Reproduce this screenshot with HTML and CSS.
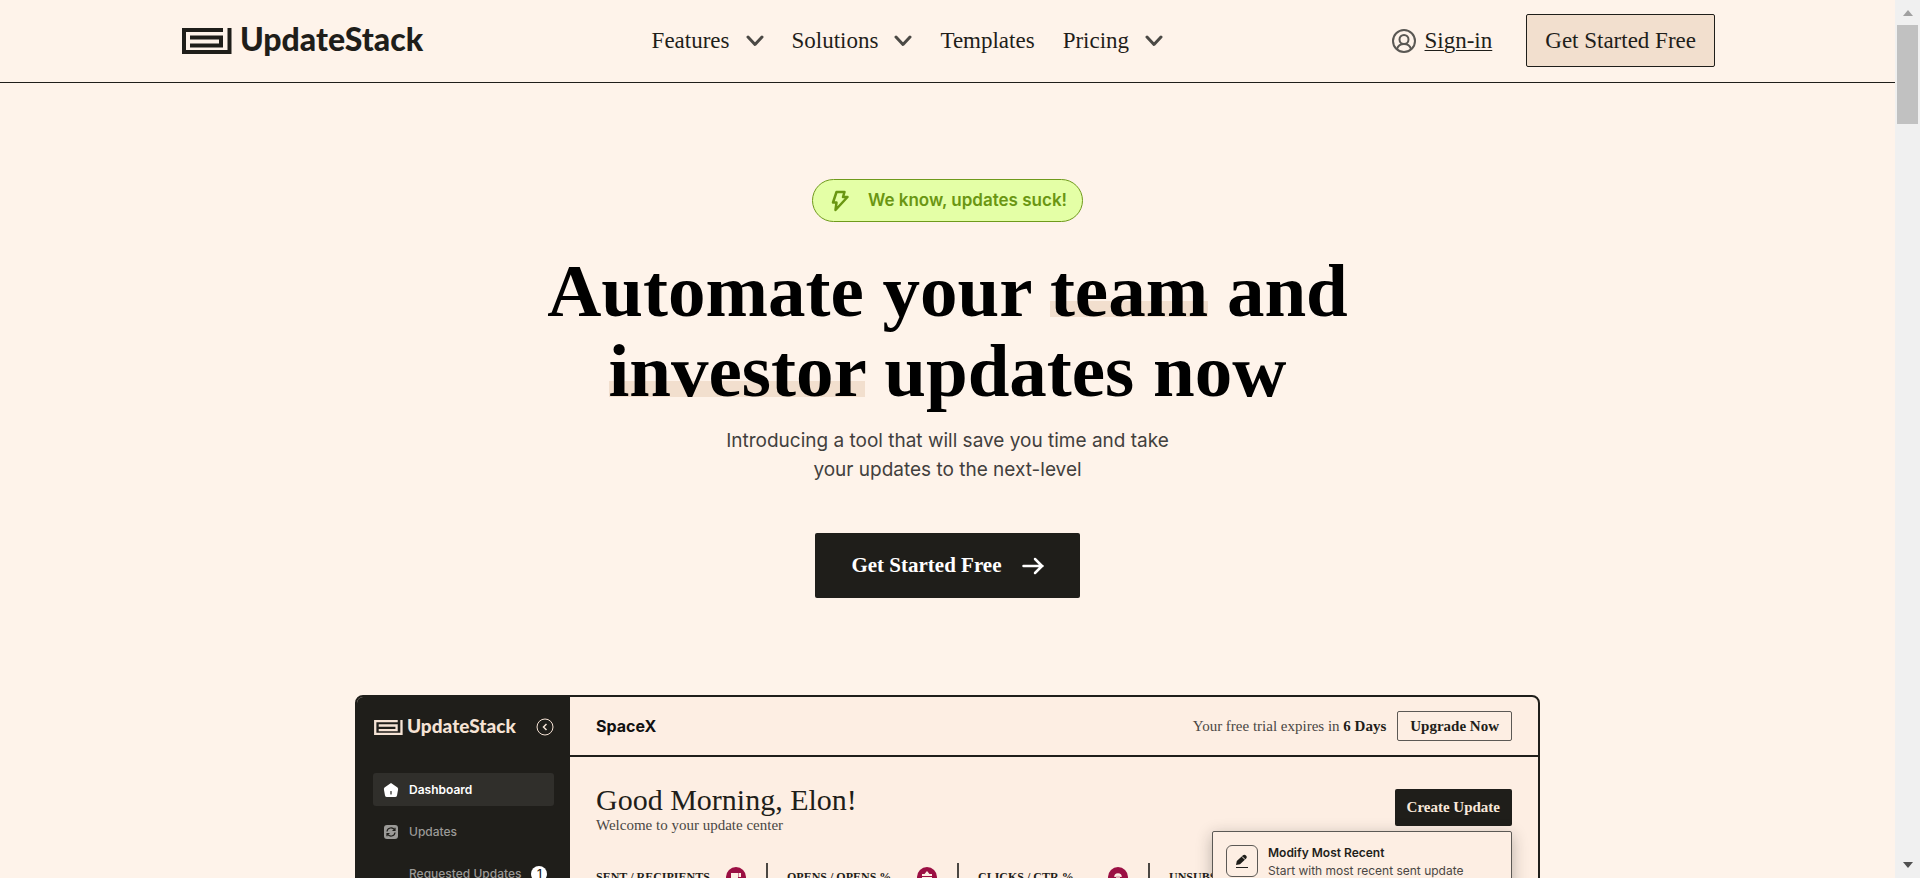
FILE: index.html
```html
<!DOCTYPE html>
<html lang="en">
<head>
<meta charset="utf-8">
<meta name="viewport" content="width=device-width, initial-scale=1">
<title>UpdateStack</title>
<link rel="stylesheet" href="styles.css">
</head>
<body>
<svg class="defs" aria-hidden="true">
  <symbol id="mark" viewBox="0 0 50 26"><path d="M41 2H2v22h45.500V0M8 9.500h31v8H8" fill="none" stroke="currentColor" stroke-width="4"/></symbol>
  <symbol id="chevron" viewBox="0 0 18 12"><path d="M2 2l7 7.500L16 2" fill="none" stroke="currentColor" stroke-width="3" stroke-linecap="round" stroke-linejoin="round"/></symbol>
</svg>
<div class="page">
  <header class="site-header">
    <a class="logo" href="#"><svg class="logo-mark"><use href="#mark"/></svg><span>UpdateStack</span></a>
    <nav class="nav">
      <button class="nav-item" type="button">Features <svg class="chevron"><use href="#chevron"/></svg></button>
      <button class="nav-item" type="button">Solutions <svg class="chevron"><use href="#chevron"/></svg></button>
      <a class="nav-item" href="#">Templates</a>
      <button class="nav-item" type="button">Pricing <svg class="chevron"><use href="#chevron"/></svg></button>
    </nav>
    <div class="account">
      <a class="signin" href="#">
        <svg class="signin-icon" viewBox="0 0 24 24" fill="none" stroke="currentColor" stroke-width="2"><circle cx="12" cy="12" r="11"/><circle cx="12" cy="10.500" r="4.500"/><path d="M5 20c1-3.500 3.500-5 7-5s6 1.500 7 5"/></svg>
        <span class="signin-text">Sign-in</span>
      </a>
      <a class="start" href="#">Get Started Free</a>
    </div>
  </header>
  <main class="hero">
    <p class="pill">
      <svg class="pill-icon" viewBox="0 0 18 22" fill="none" stroke="currentColor" stroke-width="2.500" stroke-linejoin="round"><path d="M5.500 2h8l-1.500 5h4.500L4.500 20l1-7.500H2z"/></svg>
      We know, updates suck!
    </p>
    <h1 class="title">Automate your <span class="mark">team</span> and<br><span class="mark">investor</span> updates now</h1>
    <p class="lead">Introducing a tool that will save you time and take<br>your updates to the next-level</p>
    <a class="cta" href="#">Get Started Free
      <svg class="cta-icon" viewBox="0 0 22 18" fill="none" stroke="currentColor" stroke-width="2.500" stroke-linecap="round" stroke-linejoin="round"><path d="M1.500 9h19M13 2l7 7-7 7"/></svg>
    </a>
    <section class="app">
      <aside class="sidebar">
        <div class="side-head">
          <a class="side-logo" href="#"><svg class="side-mark"><use href="#mark"/></svg><span>UpdateStack</span></a>
          <button class="collapse" type="button" aria-label="Collapse sidebar"><svg viewBox="0 0 18 18" fill="none" stroke="currentColor"><circle cx="9" cy="9" r="8"/><path d="M10.500 6l-3 3 3 3" stroke-width="1.500"/></svg></button>
        </div>
        <nav class="side-nav">
          <a class="side-item active" href="#"><svg class="side-icon" viewBox="0 0 16 16"><path d="M8 1L1.500 5.500Q0.500 6.500 1 8l1 5.500Q2.300 15 4 15h8q1.700 0 2-1.500L15 8q.5-1.500-.5-2.500z" fill="currentColor"/><path d="M8 9.500V12" stroke="#1f1e1a" stroke-width="1.200" stroke-linecap="round"/></svg>Dashboard</a>
          <a class="side-item" href="#"><svg class="side-icon" viewBox="0 0 16 16"><rect x="1" y="1" width="14" height="14" rx="3" fill="currentColor"/><path d="M4 7.500a4 4 0 0 1 7.500-1.500M12 3.800V6.500H9.500M12 8.500a4 4 0 0 1-7.500 1.500M4 12.200V9.500H6.500" fill="none" stroke="#1f1e1a" stroke-width="1.200"/></svg>Updates</a>
          <a class="side-item sub" href="#">Requested Updates <span class="count">1</span></a>
        </nav>
      </aside>
      <div class="panel">
        <div class="topbar">
          <strong class="company">SpaceX</strong>
          <span class="trial">Your free trial expires in <b>6 Days</b></span>
          <button class="upgrade" type="button">Upgrade Now</button>
        </div>
        <div class="content">
          <div class="greeting">
            <div>
              <h2 class="hello">Good Morning, Elon!</h2>
              <p class="welcome">Welcome to your update center</p>
            </div>
            <div class="create-wrap">
              <button class="create" type="button">Create Update</button>
              <div class="menu">
                <span class="menu-icon"><svg viewBox="0 0 16 16"><path d="M2 12l.8-4L9 2.300q1.500-1.200 3 .2 1.700 1.500.2 3L6 11.200z" fill="currentColor"/><path d="M8 3.500l3.200 3.200" stroke="#fdeee3"/><path d="M2 14.500h12" stroke="currentColor"/></svg></span>
                <div>
                  <p class="menu-title">Modify Most Recent</p>
                  <p class="menu-text">Start with most recent sent update</p>
                </div>
              </div>
            </div>
          </div>
          <div class="stats">
            <div class="stat">SENT / RECIPIENTS <svg class="stat-icon" viewBox="0 0 20 20"><circle cx="10" cy="10" r="10" fill="#9b0f43"/><path d="M5 6h7v8H5zM12.500 6H15v4h-2.500z" fill="#fdeee3"/></svg></div>
            <div class="stat">OPENS / OPENS % <svg class="stat-icon" viewBox="0 0 20 20"><circle cx="10" cy="10" r="10" fill="#9b0f43"/><path d="M10 4l2.500 3H15v7H5V7h2.500z" fill="#fdeee3"/><path d="M5 9.500h10" stroke="#9b0f43"/></svg></div>
            <div class="stat">CLICKS / CTR % <svg class="stat-icon" viewBox="0 0 20 20"><circle cx="10" cy="10" r="10" fill="#9b0f43"/><path d="M7 10a3 3 0 1 1 6 0M9 14V8h2v6" fill="none" stroke="#fdeee3" stroke-width="1.500"/></svg></div>
            <div class="stat">UNSUBSCRIBED</div>
          </div>
        </div>
      </div>
    </section>
  </main>
</div>
<div class="scrollbar" aria-hidden="true">
  <span class="arrow up"></span><span class="thumb"></span><span class="arrow down"></span>
</div>
</body>
</html>
```
FILE: styles.css
```css
:root {
  --ink: #1f1e1a;
  --paper: #fef3ea;
  --panel: #fdeee3;
  --sand: #f2dfce;
  --serif: "Liberation Serif", "Times New Roman", serif;
  --sans: Inter, "Liberation Sans", sans-serif;
}
* { box-sizing: border-box; }
body {
  margin: 0;
  display: flex;
  height: 100vh;
  overflow: hidden;
  background: var(--paper);
  color: var(--ink);
  font-family: var(--serif);
}
h1, h2, p { margin: 0; }
a { color: inherit; text-decoration: none; }
button { font: inherit; color: inherit; background: none; border: 0; padding: 0; cursor: pointer; }
svg { display: block; flex: none; }
.defs { position: absolute; width: 0; height: 0; }
.page { flex: 1; min-width: 0; overflow: hidden; }

.site-header {
  display: flex;
  align-items: center;
  justify-content: space-between;
  padding: 14px 180px 15px 182px;
  border-bottom: 1px solid var(--ink);
  font-size: 23px;
  line-height: 26px;
  white-space: nowrap;
}
.logo { display: flex; align-items: center; gap: 8px; font: 900 32px/26px Lato, sans-serif; }
.logo span { padding-bottom: 4px; }
.logo-mark { width: 50px; height: 26px; }
.nav { display: flex; gap: 28px; }
.nav-item { display: flex; align-items: center; gap: 16px; }
.chevron { width: 18px; height: 12px; color: #4b4945; }
.account { display: flex; align-items: center; gap: 34px; }
.signin { display: flex; align-items: center; gap: 9px; }
.signin-text { text-decoration: underline; text-decoration-thickness: 1px; text-underline-offset: 2px; }
.signin-icon { width: 24px; height: 24px; color: #5a5854; }
.start { padding: 13px 18px 12px; border: 1px solid var(--ink); border-radius: 2px; background: var(--sand); }

.hero { display: flex; flex-direction: column; align-items: center; padding: 96px 24px 0; }
.pill {
  display: flex;
  align-items: center;
  gap: 19px;
  padding: 8px 15px 8px 18px;
  border: 1px solid #6f9a1c;
  border-radius: 24px;
  background: #e4ffa6;
  color: #6a9612;
  font: 600 17px/25px var(--sans);
}
.pill-icon { width: 18px; height: 22px; }
.title { margin-top: 29px; color: #000; font-size: 75px; line-height: 80px; font-weight: 700; text-align: center; }
.mark { background: linear-gradient(var(--sand), var(--sand)) 0 52px / 100% 16px no-repeat; }
.lead { margin-top: 15px; color: #42403d; font: 400 19px/29px var(--sans); text-align: center; }
.cta {
  display: flex;
  align-items: center;
  gap: 20px;
  margin-top: 49px;
  padding: 19px 36px;
  border-radius: 2px;
  background: var(--ink);
  color: #fff;
  font-size: 21px;
  line-height: 27px;
  font-weight: 700;
}
.cta-icon { width: 22px; height: 18px; }

.app {
  display: flex;
  width: 100%;
  max-width: 1185px;
  margin-top: 97px;
  border: 2px solid var(--ink);
  border-radius: 8px;
  background: var(--panel);
  overflow: hidden;
}
.sidebar { width: 213px; flex: none; padding: 20px 16px 30px; background: var(--ink); color: #9b9a97; font: 500 12px/16px var(--sans); }
.side-head { display: flex; align-items: center; justify-content: space-between; height: 20px; color: #f5e3d5; }
.side-logo { display: flex; align-items: center; gap: 4px; margin-left: 1px; font: 900 19px/16px Lato, sans-serif; }
.side-logo span { padding-bottom: 2px; }
.side-mark { width: 29px; height: 15px; }
.collapse svg { width: 18px; height: 18px; }
.side-nav { display: flex; flex-direction: column; gap: 9px; margin-top: 36px; }
.side-item { display: flex; align-items: center; gap: 10px; height: 33px; padding: 0 10px; border-radius: 3px; }
.side-item.active { background: #302f2b; color: #fff; font-weight: 600; }
.side-icon { width: 16px; height: 16px; }
.side-item.sub { padding-left: 36px; white-space: nowrap; }
.count { width: 16px; height: 16px; flex: none; border-radius: 50%; background: #fff; color: var(--ink); text-align: center; }

.panel { flex: 1; min-width: 0; }
.topbar { display: flex; align-items: center; height: 60px; padding: 0 26px; border-bottom: 2px solid var(--ink); font-size: 15px; }
.company { margin-right: auto; color: #111; font: 700 16px/20px var(--sans); }
.trial { margin-right: 11px; color: #4a4743; }
.trial b { color: var(--ink); }
.upgrade { height: 30px; padding: 0 12px; border: 1px solid #5c5955; border-radius: 2px; font-weight: 700; }
.content { padding: 26px; }
.greeting { display: flex; justify-content: space-between; height: 80px; }
.hello { font-size: 30px; line-height: 34px; font-weight: 400; }
.welcome { color: #4a4743; font-size: 15px; line-height: 16px; }
.create-wrap { position: relative; padding-top: 6px; }
.create { height: 37px; padding: 0 12px; border-radius: 2px; background: var(--ink); color: #f8e8da; font-size: 15px; font-weight: 700; }
.menu {
  position: absolute;
  top: 48px;
  right: 0;
  display: flex;
  gap: 10px;
  width: 300px;
  padding: 13px;
  border: 1px solid #5c5955;
  border-radius: 2px;
  background: var(--panel);
  box-shadow: 0 4px 16px rgba(31, 30, 26, 0.3);
  font: 400 12px/20px var(--sans);
}
.menu-icon { display: grid; place-items: center; width: 32px; height: 32px; border: 1px solid #5c5955; border-radius: 6px; }
.menu-icon svg { width: 16px; height: 16px; }
.menu-title { font-weight: 600; line-height: 16px; }
.menu-text { color: #4a4743; }
.stats { display: flex; }
.stat { display: flex; align-items: center; justify-content: space-between; flex: 0 0 172px; height: 48px; padding: 4px 20px 24px 0; margin-right: 19px; border-right: 2px solid #4a4743; font-size: 12px; line-height: 20px; font-weight: 700; white-space: nowrap; }
.stat:last-child { margin-right: 0; border: 0; }
.stat-icon { width: 20px; height: 20px; }

.scrollbar { display: flex; flex-direction: column; align-items: center; flex: 0 0 25px; padding: 10px 2px; background: #f0f0f0; }
.arrow { border: 5px solid transparent; border-width: 0 5px; }
.up { border-bottom: 6px solid #a0a0a0; }
.down { margin-top: auto; border-top: 6px solid #505050; }
.thumb { width: 100%; height: 99px; margin-top: 9px; background: #c1c1c1; }
```
